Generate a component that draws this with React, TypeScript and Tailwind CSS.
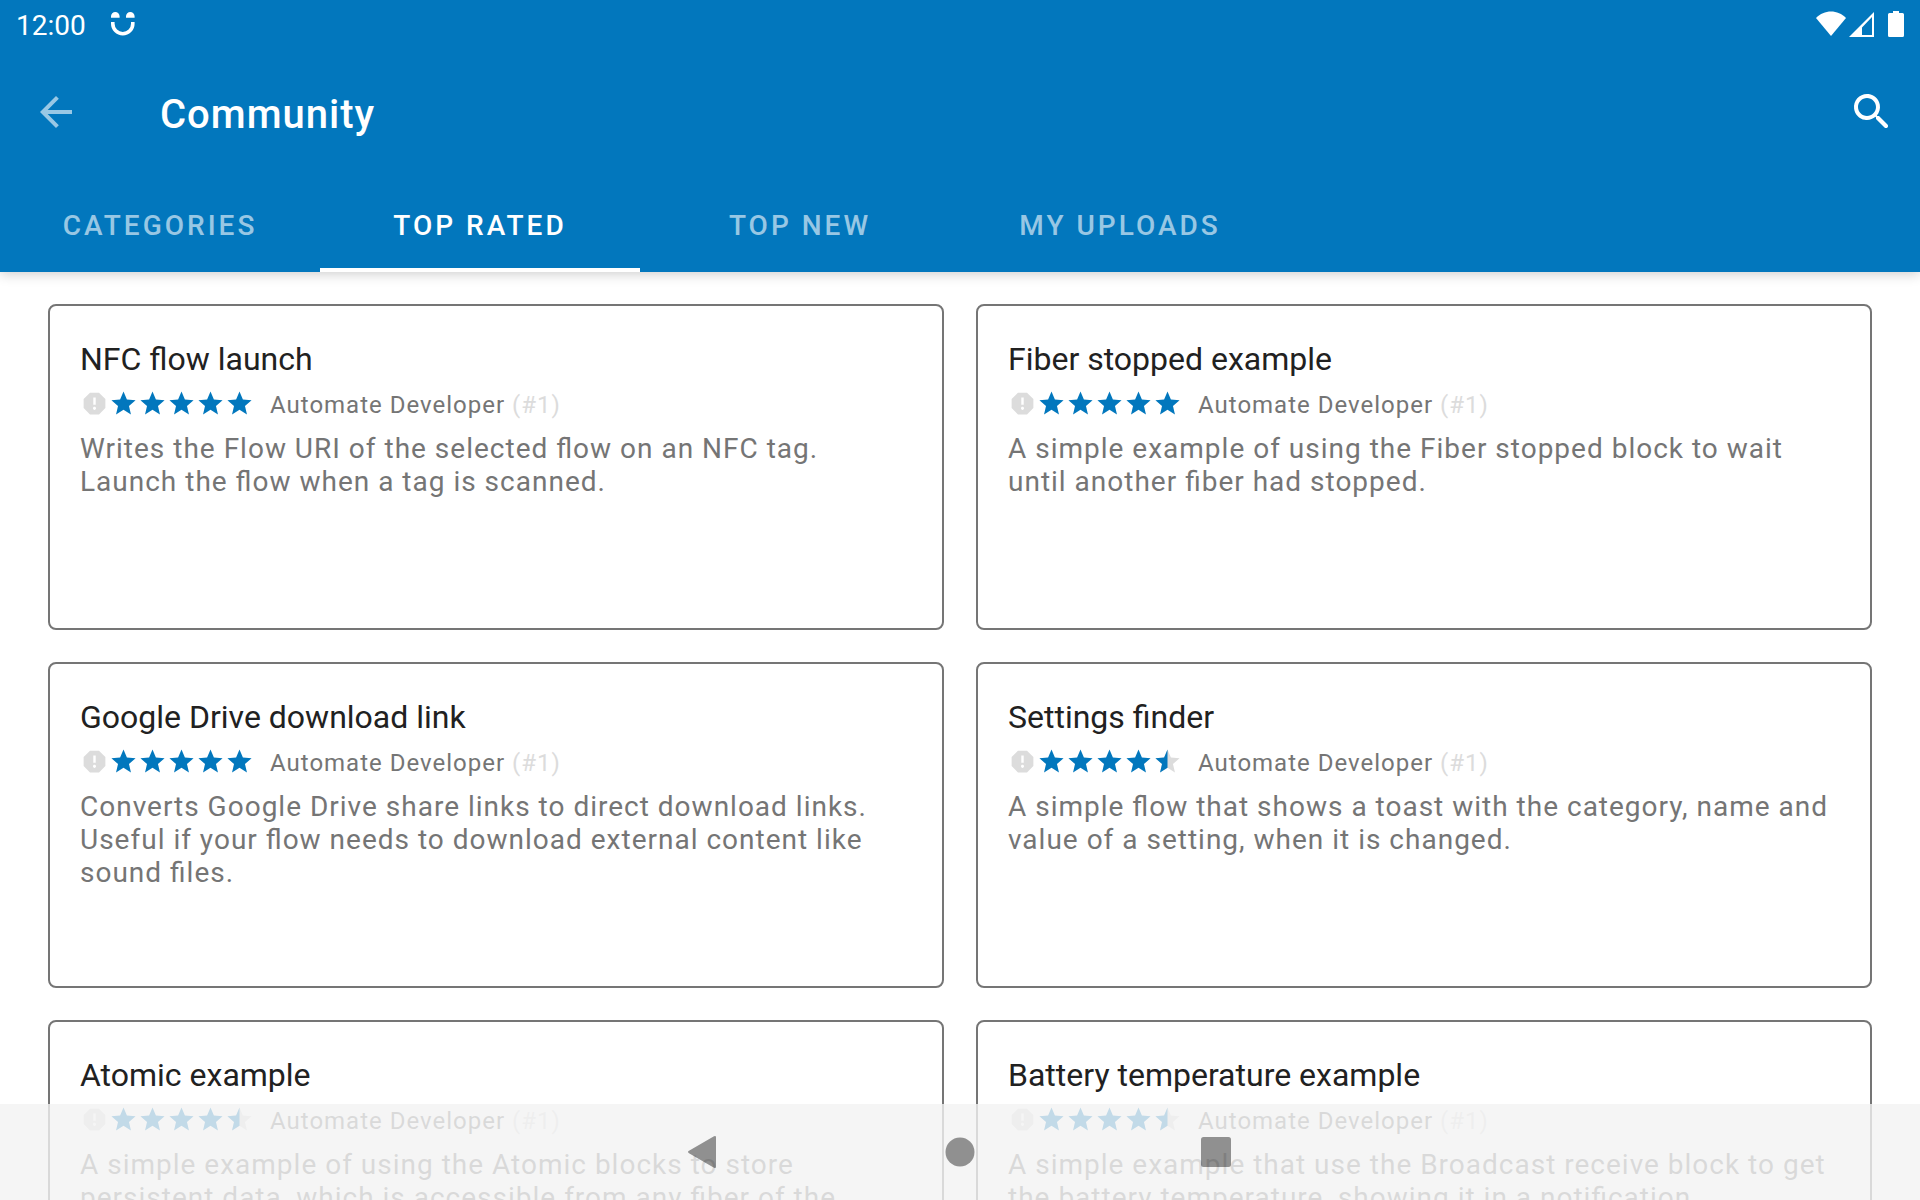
import React from "react";

const flows = [
  {
    title: "NFC flow launch",
    rating: 5,
    text: "Writes the Flow URI of the selected flow on an NFC tag. Launch the flow when a tag is scanned.",
  },
  {
    title: "Fiber stopped example",
    rating: 5,
    text: "A simple example of using the Fiber stopped block to wait until another fiber had stopped.",
  },
  {
    title: "Google Drive download link",
    rating: 5,
    text: "Converts Google Drive share links to direct download links. Useful if your flow needs to download external content like sound files.",
  },
  {
    title: "Settings finder",
    rating: 4.5,
    text: "A simple flow that shows a toast with the category, name and value of a setting, when it is changed.",
  },
  {
    title: "Atomic example",
    rating: 4.5,
    text: "A simple example of using the Atomic blocks to store persistent data, which is accessible from any fiber of the",
  },
  {
    title: "Battery temperature example",
    rating: 4.5,
    text: "A simple example that use the Broadcast receive block to get the battery temperature, showing it in a notification.",
  },
];

const tabs = ["Categories", "Top rated", "Top new", "My uploads"];

const STAR =
  "M12 17.27L18.18 21l-1.64-7.03L22 9.24l-7.19-.61L12 2 9.19 8.63 2 9.24l5.46 4.73L5.82 21z";

const Star = ({ half }: { half: boolean }) => (
  <svg viewBox="0 0 24 24" className="size-[29px]" aria-hidden="true">
    <path d={STAR} fill={half ? "#dcdcdc" : "#0277bd"} />
    {half && <path d="M12 2L9.19 8.63 2 9.24l5.46 4.73L5.82 21 12 17.27z" fill="#0277bd" />}
  </svg>
);

const StatusBar = () => (
  <div className="flex h-12 items-center justify-between px-4">
    <div className="flex items-center gap-[25px] text-[28px] leading-[33px]">
      <span className="pt-0.5">12:00</span>
      <svg viewBox="0 0 24 24" className="size-6" fill="white" aria-hidden="true">
        <path d="M0 5.800V4.300a4.300 4.300 0 0 1 8.600 0v1.500zM15 5.800V4.300a4.300 4.300 0 0 1 8.600 0v1.500z" />
        <path d="M1.800 10v1.700a10 10 0 0 0 20 0V10" fill="none" stroke="white" strokeWidth="3.600" />
      </svg>
    </div>
    <svg viewBox="0 0 88 26" className="h-[26px] w-[88px]" fill="white" aria-hidden="true">
      <path d="M0 7C8-1.700 22-1.700 30 7L15 25z" />
      <path d="M33 26L58 1v25zM46 24h10V6L46 16.500z" fillRule="evenodd" />
      <path d="M73.500 2H77V0h6v2h3.500q1.500 0 1.500 1.500v21q0 1.500-1.500 1.500h-13q-1.500 0-1.500-1.500v-21q0-1.500 1.500-1.500z" />
    </svg>
  </div>
);

const FlowCard = ({ title, rating, text }: (typeof flows)[number]) => (
  <article className="rounded-lg border-2 border-[#757575] px-[30px] pt-[34px] pb-[31px]">
    <h2 className="text-[32px] leading-[38px] text-[#212121]">{title}</h2>
    <div className="mt-[11px] mb-[14px] flex h-[29px] items-center">
      <svg viewBox="0 0 24 24" className="size-[29px]" fill="#dcdcdc" aria-hidden="true">
        <path d="M15.730 3H8.270L3 8.270v7.460L8.270 21h7.460L21 15.730V8.270L15.730 3zM12 17.300c-.720 0-1.300-.580-1.300-1.300s.580-1.300 1.300-1.300 1.300.580 1.300 1.300-.580 1.300-1.300 1.300zm1-4.300h-2V7h2v6z" />
      </svg>
      <div className="flex" role="img" aria-label={`${rating} of 5 stars`}>
        {[1, 2, 3, 4, 5].map((n) => (
          <Star key={n} half={n > rating} />
        ))}
      </div>
      <p className="ml-4 pt-0.5 text-2xl leading-7 tracking-[1px] text-[#757575]">
        Automate Developer <span className="text-[#dcdcdc]">(#1)</span>
      </p>
    </div>
    <p className="min-h-[165px] text-[28px] leading-[33px] tracking-[1px] text-[#757575] [font-feature-settings:'liga']">
      {text}
    </p>
  </article>
);

const NavBar = () => (
  <nav className="absolute inset-x-0 bottom-0 flex h-24 items-center justify-center gap-52 bg-[#f3f3f3]/80">
    <button aria-label="Back" className="size-12">
      <svg viewBox="0 0 48 48" fill="black" fillOpacity="0.41">
        <path d="M9 22.800L34 8.300q2-1 2 1v29.400q0 2-2 1L9 25.200q-2-1.200 0-2.400z" />
      </svg>
    </button>
    <button aria-label="Home" className="size-12">
      <svg viewBox="0 0 48 48" fill="black" fillOpacity="0.41">
        <circle cx="24" cy="24" r="14.500" />
      </svg>
    </button>
    <button aria-label="Overview" className="size-12">
      <svg viewBox="0 0 48 48" fill="black" fillOpacity="0.41">
        <rect x="9" y="9" width="30" height="30" rx="2.500" />
      </svg>
    </button>
  </nav>
);

export default function App() {
  return (
    <div className="relative flex h-screen flex-col overflow-hidden bg-white font-[Roboto,sans-serif]">
      <header className="relative bg-[#0277bd] text-white shadow-[0_2px_12px_rgba(0,0,0,0.2)]">
        <StatusBar />
        <div className="flex h-32 items-center px-8">
          <button aria-label="Navigate up" className="size-12">
            <svg viewBox="0 0 24 24" fill="white" fillOpacity="0.6">
              <path d="M20 11H7.830l5.590-5.590L12 4l-8 8 8 8 1.410-1.410L7.830 13H20v-2z" />
            </svg>
          </button>
          <h1 className="ml-20 pt-1 text-[40px] leading-[47px] font-medium tracking-[1px]">Community</h1>
          <button aria-label="Search" className="-mr-2 ml-auto size-12">
            <svg viewBox="0 0 24 24" fill="white">
              <path d="M15.500 14h-.790l-.280-.270c1.200-1.400 1.820-3.310 1.480-5.340-.470-2.780-2.790-5-5.590-5.340-4.230-.520-7.790 3.040-7.270 7.270.340 2.800 2.560 5.120 5.340 5.590 2.030.340 3.940-.280 5.340-1.480l.270.280v.790l4.250 4.250c.410.410 1.080.410 1.490 0 .410-.410.410-1.080 0-1.490L15.500 14zm-6 0C7.010 14 5 11.990 5 9.500S7.010 5 9.500 5 14 7.010 14 9.500 11.990 14 9.500 14z" />
            </svg>
          </button>
        </div>
        <div role="tablist" className="flex h-24">
          {tabs.map((tab) => (
            <button
              key={tab}
              role="tab"
              aria-selected={tab === "Top rated"}
              className="w-80 border-y-4 border-transparent pt-0.5 text-[28px] leading-[33px] font-medium tracking-[3px] text-white/60 uppercase aria-selected:border-b-white aria-selected:text-white"
            >
              {tab}
            </button>
          ))}
        </div>
      </header>
      <main className="grid min-h-0 flex-1 grid-cols-2 content-start gap-8 overflow-hidden px-12 py-8">
        {flows.map((flow) => (
          <FlowCard key={flow.title} {...flow} />
        ))}
      </main>
      <NavBar />
    </div>
  );
}
